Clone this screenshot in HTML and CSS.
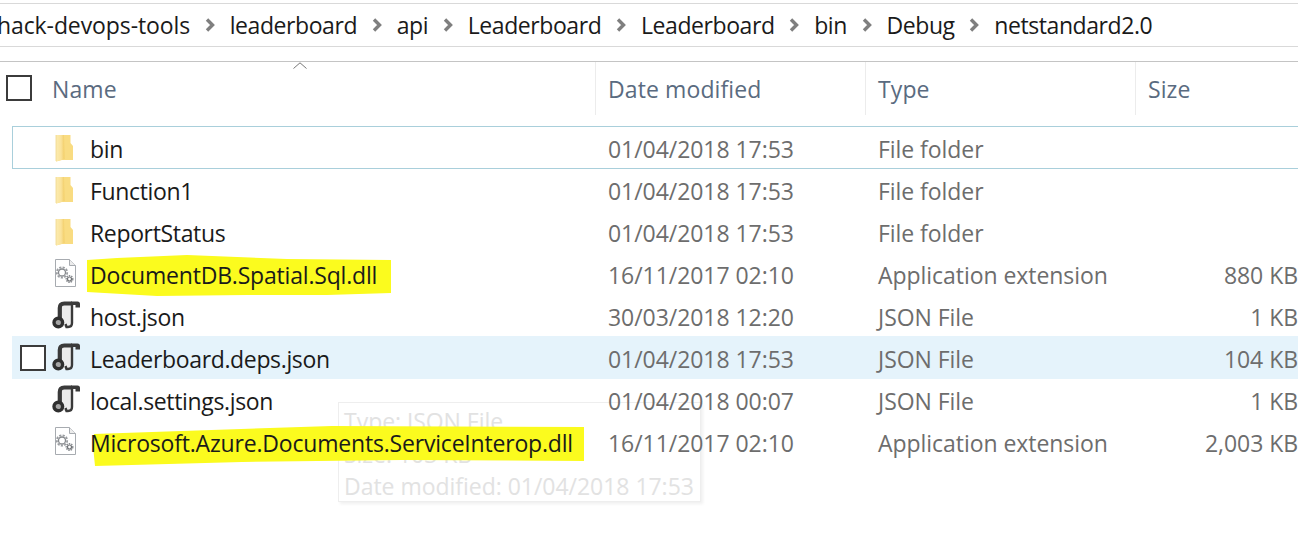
FILE: index.html
```html
<!DOCTYPE html>
<html lang="en">
<head>
<meta charset="utf-8">
<title>netstandard2.0</title>
<link rel="stylesheet" href="styles.css">
</head>
<body>
<svg class="defs" width="0" height="0" aria-hidden="true">
  <defs>
    <linearGradient id="foldShade" x1="0" x2="1" y1="0" y2="0">
      <stop offset="0" stop-color="#fcecb0"/>
      <stop offset=".6" stop-color="#fae29a"/>
      <stop offset="1" stop-color="#f2cd66"/>
    </linearGradient>
  </defs>
  <symbol id="folder" viewBox="0 0 30 32">
    <path d="M4 3h14.500v8l2.500 3v14H10l-6 1.500z" fill="#f9dc82"/>
    <path d="M4 3h8l.5 24-8.500 2.500z" fill="url(#foldShade)"/>
    <path d="M4 3v26" stroke="#f0d68a" stroke-width=".8"/>
  </symbol>
  <symbol id="dll" viewBox="0 0 30 32">
    <path d="M3.500 1.500h14l6 6v21h-20z" fill="#fff" stroke="#a7abb0"/>
    <path d="M17.500 1.500v6h6" fill="#ececec" stroke="#a7abb0"/>
    <circle cx="10" cy="14.500" r="5.200" fill="none" stroke="#9a9da1" stroke-width="1.800" stroke-dasharray="2.200 1.300"/>
    <circle cx="10" cy="14.500" r="3.500" fill="#fff" stroke="#85888c" stroke-width="1.300"/>
    <circle cx="17.500" cy="21" r="3.300" fill="none" stroke="#8b8e92" stroke-width="1.400" stroke-dasharray="1.500 .9"/>
    <circle cx="17.500" cy="21" r="2" fill="#fff" stroke="#6f7276" stroke-width="1.200"/>
  </symbol>
  <symbol id="script" viewBox="0 0 30 32">
    <path d="M9 5h11v20l-3 2H9z" fill="#ececec"/>
    <path d="M7.800 18V8q0-4.500 4.500-4.500H20" fill="none" stroke="#3a3a3a" stroke-width="4.200"/>
    <path d="M20 3v20q0 4-4 4h-1.500l-1-3" fill="none" stroke="#3a3a3a" stroke-width="2.400"/>
    <path d="M19 1.500h6.500q2.500 0 2.500 2.500v3.500h-4.500V5H19z" fill="#3a3a3a"/>
    <circle cx="6.300" cy="22.500" r="4.300" fill="#a5a5a5" stroke="#2f2f2f" stroke-width="3.400"/>
  </symbol>
</svg>

<nav class="crumbs">
  <span class="crumb crumb-first">hack-devops-tools</span><span class="sep"><svg viewBox="0 0 10 14" width="10" height="14"><path d="M2 1.500 7.500 7 2 12.500" fill="none" stroke="#7f7f7f" stroke-width="3.400"/></svg></span>
  <span class="crumb">leaderboard</span><span class="sep"><svg viewBox="0 0 10 14" width="10" height="14"><path d="M2 1.500 7.500 7 2 12.500" fill="none" stroke="#7f7f7f" stroke-width="3.400"/></svg></span>
  <span class="crumb">api</span><span class="sep"><svg viewBox="0 0 10 14" width="10" height="14"><path d="M2 1.500 7.500 7 2 12.500" fill="none" stroke="#7f7f7f" stroke-width="3.400"/></svg></span>
  <span class="crumb">Leaderboard</span><span class="sep"><svg viewBox="0 0 10 14" width="10" height="14"><path d="M2 1.500 7.500 7 2 12.500" fill="none" stroke="#7f7f7f" stroke-width="3.400"/></svg></span>
  <span class="crumb">Leaderboard</span><span class="sep"><svg viewBox="0 0 10 14" width="10" height="14"><path d="M2 1.500 7.500 7 2 12.500" fill="none" stroke="#7f7f7f" stroke-width="3.400"/></svg></span>
  <span class="crumb">bin</span><span class="sep"><svg viewBox="0 0 10 14" width="10" height="14"><path d="M2 1.500 7.500 7 2 12.500" fill="none" stroke="#7f7f7f" stroke-width="3.400"/></svg></span>
  <span class="crumb">Debug</span><span class="sep"><svg viewBox="0 0 10 14" width="10" height="14"><path d="M2 1.500 7.500 7 2 12.500" fill="none" stroke="#7f7f7f" stroke-width="3.400"/></svg></span>
  <span class="crumb">netstandard2.0</span>
</nav>

<header class="columns">
  <svg class="sort" viewBox="0 0 14 7" width="14" height="7"><path d="M.5 6.500 7 .8l6.500 5.700" fill="none" stroke="#777"/></svg>
  <span class="box head-box"></span>
  <span class="col col-name">Name</span>
  <span class="col col-date">Date modified</span>
  <span class="col col-type">Type</span>
  <span class="col col-size">Size</span>
</header>

<main class="list">
  <aside class="tip">
    <span>Type: JSON File</span>
    <span>Size: 103 KB</span>
    <span>Date modified: 01/04/2018 17:53</span>
  </aside>

  <div class="row row-focus">
    <span class="check"></span>
    <svg class="ico"><use href="#folder"/></svg>
    <span class="name">bin</span><span class="meta">01/04/2018 17:53</span><span class="meta">File folder</span><span class="meta size"></span>
  </div>
  <div class="row">
    <span class="check"></span>
    <svg class="ico"><use href="#folder"/></svg>
    <span class="name">Function1</span><span class="meta">01/04/2018 17:53</span><span class="meta">File folder</span><span class="meta size"></span>
  </div>
  <div class="row">
    <span class="check"></span>
    <svg class="ico"><use href="#folder"/></svg>
    <span class="name">ReportStatus</span><span class="meta">01/04/2018 17:53</span><span class="meta">File folder</span><span class="meta size"></span>
  </div>
  <div class="row">
    <span class="check"></span>
    <svg class="ico"><use href="#dll"/></svg>
    <span class="name"><span class="mark"><svg class="ink ink-a" viewBox="0 0 304 41" preserveAspectRatio="none"><path d="M0 5 30 3 100 0l100 4 104 1v33l-64 2-80 0-90 1-70-4z" fill="#fbfb1e"/></svg><span class="label">DocumentDB.Spatial.Sql.dll</span></span></span><span class="meta">16/11/2017 02:10</span><span class="meta">Application extension</span><span class="meta size">880 KB</span>
  </div>
  <div class="row">
    <span class="check"></span>
    <svg class="ico"><use href="#script"/></svg>
    <span class="name">host.json</span><span class="meta">30/03/2018 12:20</span><span class="meta">JSON File</span><span class="meta size">1 KB</span>
  </div>
  <div class="row row-hover">
    <span class="check box"></span>
    <svg class="ico"><use href="#script"/></svg>
    <span class="name">Leaderboard.deps.json</span><span class="meta">01/04/2018 17:53</span><span class="meta">JSON File</span><span class="meta size">104 KB</span>
  </div>
  <div class="row">
    <span class="check"></span>
    <svg class="ico"><use href="#script"/></svg>
    <span class="name">local.settings.json</span><span class="meta">01/04/2018 00:07</span><span class="meta">JSON File</span><span class="meta size">1 KB</span>
  </div>
  <div class="row">
    <span class="check"></span>
    <svg class="ico"><use href="#dll"/></svg>
    <span class="name"><span class="mark"><svg class="ink ink-b" viewBox="0 0 492 40" preserveAspectRatio="none"><path d="M2 8 60 6 240 0l252 1v34l-182-1-160 2L3 40 1 20z" fill="#fbfb1e"/></svg><span class="label">Microsoft.Azure.Documents.ServiceInterop.dll</span></span></span><span class="meta">16/11/2017 02:10</span><span class="meta">Application extension</span><span class="meta size">2,003 KB</span>
  </div>
</main>
</body>
</html>
```

FILE: styles.css
```css
* { box-sizing: border-box; }

html, body {
  margin: 0;
  height: 540px;
  overflow: hidden;
  background: #fff;
}

body {
  font-family: "Open Sans", "Noto Sans", sans-serif;
  font-size: 23px;
  letter-spacing: -0.17px;
  color: #1a1a1a;
  padding-top: 3px;
}

.defs { position: absolute; }

.crumbs {
  height: 44px;
  margin-bottom: 14px;
  border-top: 1px solid #d9d9d9;
  border-bottom: 1px solid #d9d9d9;
  display: flex;
  align-items: center;
  gap: 14.800px;
  margin-left: -3px;
  white-space: nowrap;
  letter-spacing: -0.42px;
}

.crumb-first { letter-spacing: -0.10px; }

.sep { display: flex; }

.columns {
  position: relative;
  height: 54px;
  border-top: 1px solid #c4c4c4;
  display: grid;
  grid-template-columns: 52px 543px 270px 270px 1fr;
  align-items: stretch;
  color: #5a6b80;
  letter-spacing: 0.1px;
}

.sort { position: absolute; left: 293px; top: 0; }

.head-box {
  position: absolute;
  left: 6px;
  top: 13px;
}

.box {
  width: 26px;
  height: 26px;
  border: 2px solid #3b3b3b;
  background: #fff;
}

.col {
  display: flex;
  align-items: center;
  padding: 0 0 0 12px;
  border-left: 1px solid #ececec;
  height: 53px;
}

.col-name {
  grid-column: 2;
  padding-left: 0;
  border-left: 0;
}

.list {
  position: relative;
  margin: 11px 0 0 12px;
}

.row {
  position: relative;
  height: 43px;
  margin-bottom: -1px;
  border: 1px solid transparent;
  border-right: 0;
  display: grid;
  grid-template-columns: 39px 38px 518px 270px 270px 1fr;
  align-items: center;
}

.row-focus { border-color: #a9cfdb; }
.row-hover { background: #e5f3fb; }

.check { margin-left: 7px; }

.ico { width: 30px; height: 32px; }

.name {
  position: relative;
  padding-top: 2px;
  white-space: nowrap;
  letter-spacing: -0.35px;
}

.mark { position: relative; display: inline-block; }

.label {
  position: relative;
  letter-spacing: -0.19px;
}

.ink { position: absolute; }

.ink-a { left: -3px; top: -4px; width: 304px; height: 41px; }
.ink-b { left: 2px; top: -1px; width: 492px; height: 40px; }

.meta {
  padding-top: 2px;
  color: #6d6d6d;
  white-space: nowrap;
  letter-spacing: -0.05px;
}

.size { text-align: right; }

.tip {
  position: absolute;
  left: 326px;
  top: 276px;
  width: 363px;
  height: 100px;
  padding: 2px 5px 0;
  border: 1px solid #eeeeee;
  box-shadow: 2px 2px 3px #f0f0f0;
  display: flex;
  flex-direction: column;
  line-height: 32.500px;
  letter-spacing: -0.03px;
  color: #e2e2e2;
  background: #fff;
}
```
